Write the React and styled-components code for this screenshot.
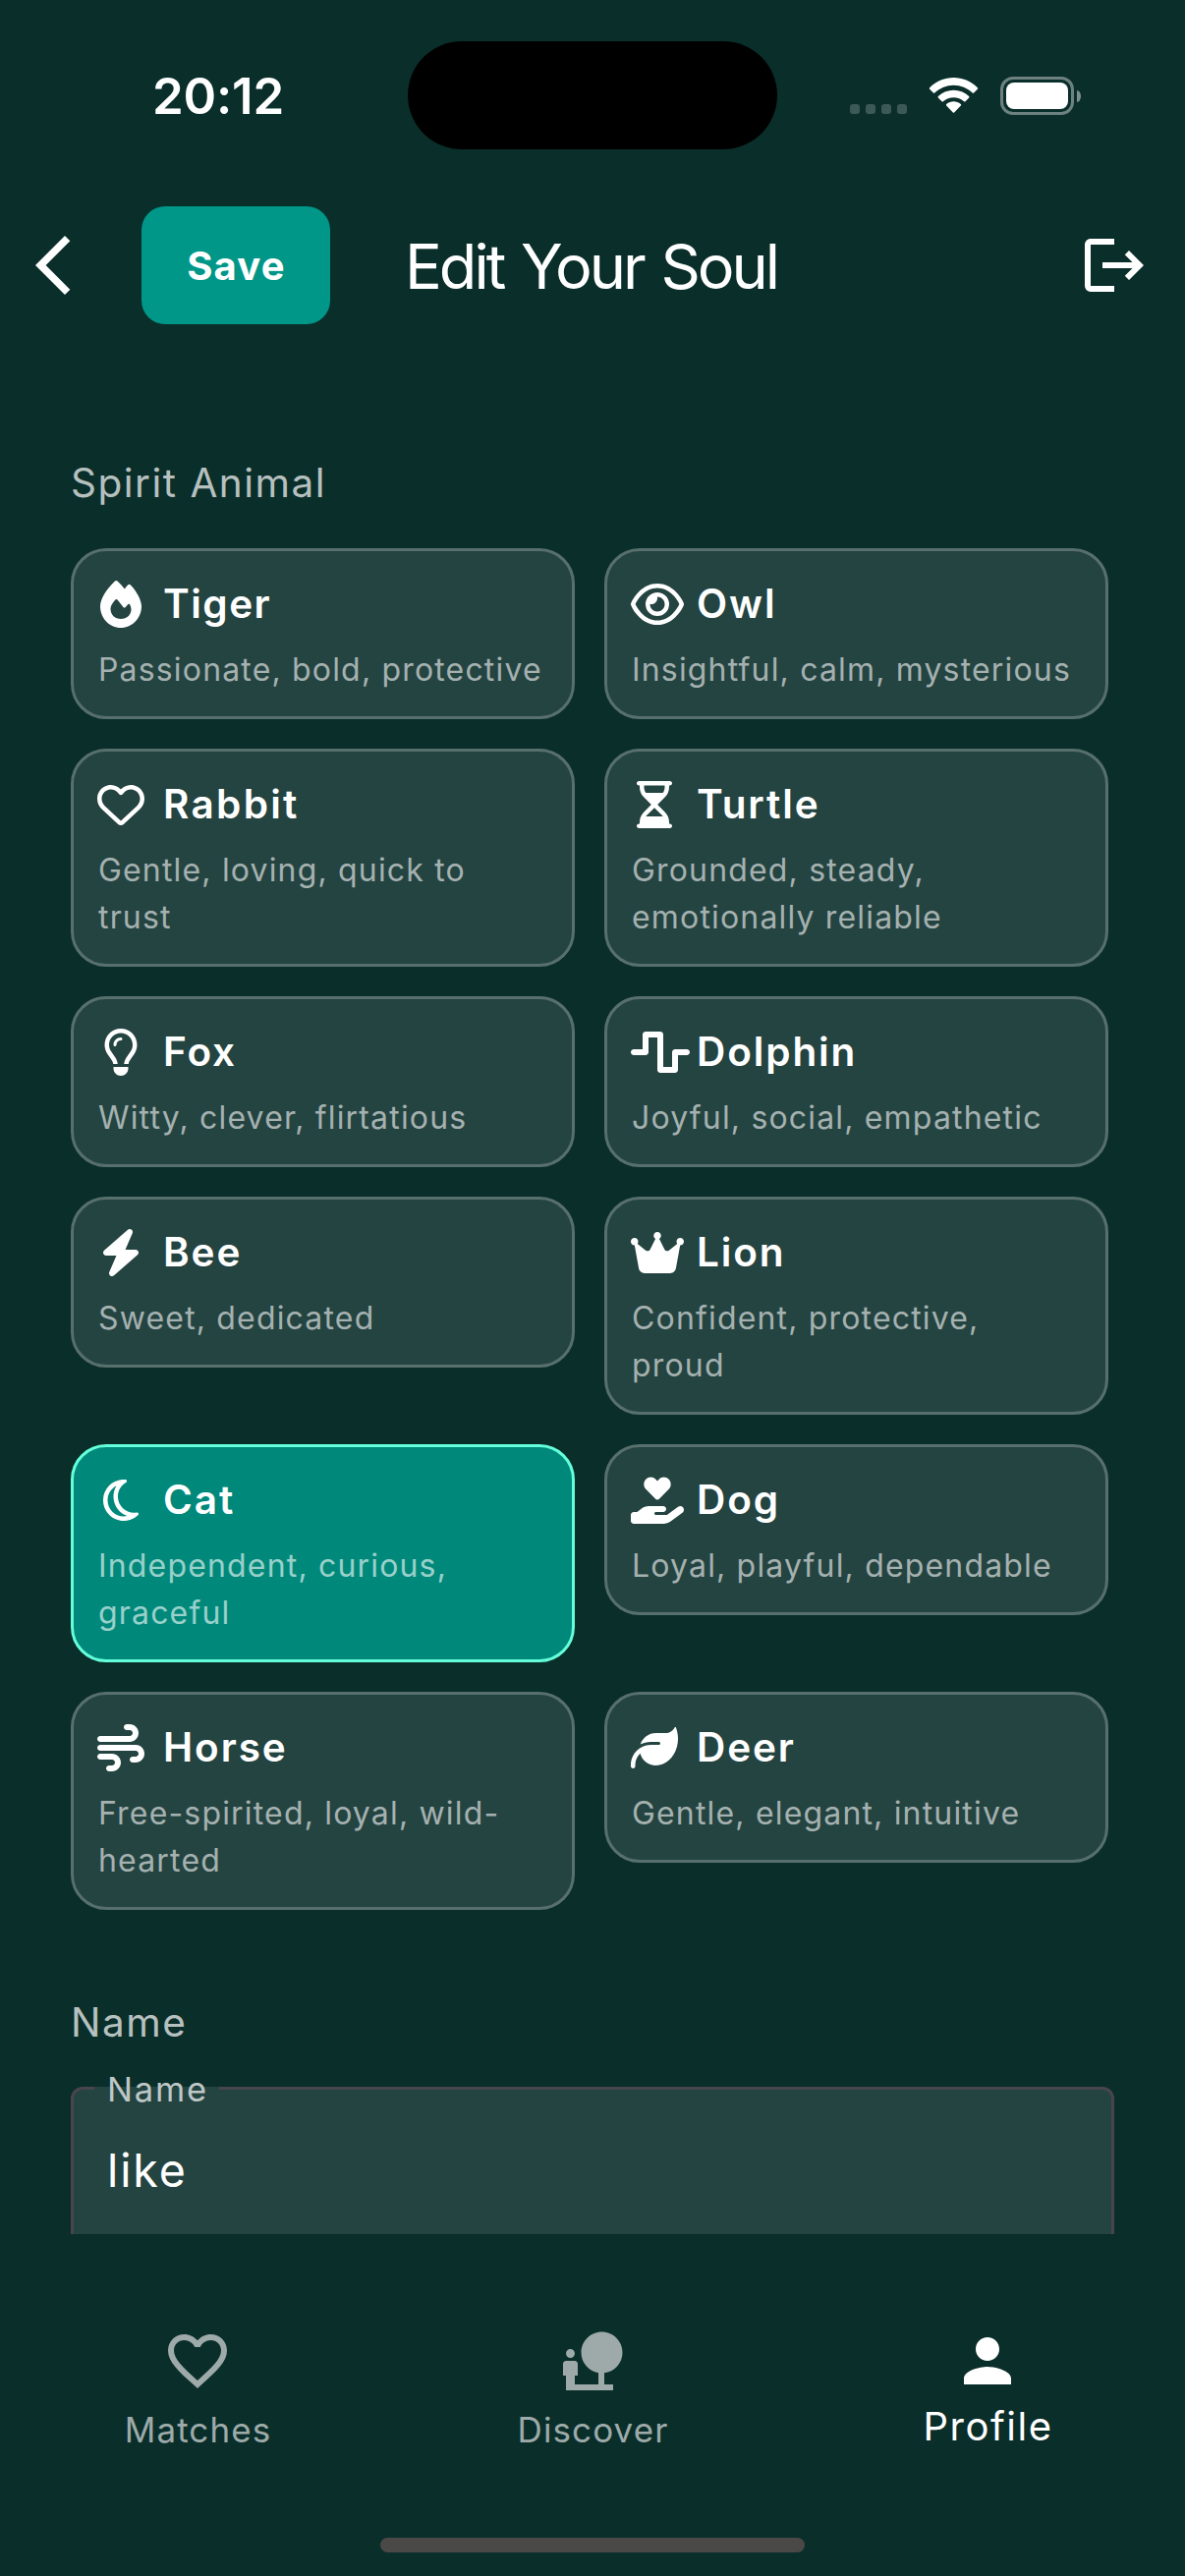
import React from "react";
import styled, { createGlobalStyle, css } from "styled-components";
import {
  FaFire,
  FaRegEye,
  FaRegHeart,
  FaRegHourglassHalf,
  FaRegLightbulb,
  FaWaveSquare,
  FaBolt,
  FaCrown,
  FaRegMoon,
  FaHandHoldingHeart,
  FaWind,
  FaLeaf,
} from "react-icons/fa6";
import { MdArrowBackIosNew, MdFavoriteBorder, MdNaturePeople, MdPerson } from "react-icons/md";

const color = {
  background: "#0a2e2a",
  surface: "#244441",
  surfaceBorder: "#58706d",
  selected: "#00897b",
  selectedBorder: "#64ffda",
  primary: "#009688",
  outline: "#49454f",
  white: "#ffffff",
  label: "#b6c0bf",
  muted: "#9daaa9",
};

const GlobalStyle = createGlobalStyle`
  * { box-sizing: border-box; }
  body {
    margin: 0;
    background: ${color.background};
    font-family: Inter, "Liberation Sans", sans-serif;
    -webkit-font-smoothing: antialiased;
  }
`;

const Screen = styled.div`
  width: 1206px;
  height: 2622px;
  display: flex;
  flex-direction: column;
  background: ${color.background};
  color: ${color.white};
  overflow: hidden;
`;

const StatusBar = styled.div`
  flex: none;
  height: 177px;
  display: grid;
  grid-template-columns: 415px 376px 415px;
  align-items: start;
`;

const Clock = styled.div`
  padding: 68px 0 0 155px;
  font-size: 51px;
  font-weight: 600;
  line-height: 60px;
  letter-spacing: -0.2px;
`;

const Island = styled.div`
  height: 110px;
  margin-top: 42px;
  border-radius: 55px;
  background: #000;
`;

const StatusIcons = styled.div`
  height: 117px;
  padding-left: 74px;
  display: flex;
  align-items: flex-end;
  gap: 22px;
`;

const SignalDots = styled.div`
  display: flex;
  gap: 6px;
  padding-bottom: 1px;
`;

const Dot = styled.span`
  width: 10px;
  height: 10px;
  border-radius: 3px;
  background: #3d5956;
`;

const WifiIcon = styled.svg`
  width: 51px;
  height: 37px;
  margin-bottom: 1px;
  fill: ${color.white};
`;

const Battery = styled.div`
  display: flex;
  align-items: center;
  gap: 3px;
`;

const BatteryCase = styled.div`
  width: 75px;
  height: 39px;
  padding: 3px;
  border: 3px solid #6d8280;
  border-radius: 13px;
`;

const BatteryLevel = styled.div`
  height: 100%;
  border-radius: 8px;
  background: ${color.white};
`;

const BatteryTip = styled.div`
  width: 4px;
  height: 12px;
  border-radius: 0 4px 4px 0 / 0 6px 6px 0;
  background: #7c8f8d;
`;

const Header = styled.header`
  flex: none;
  height: 186px;
  padding: 0 36px 0 18px;
  display: flex;
  align-items: center;
`;

const IconButton = styled.button`
  width: 72px;
  height: 72px;
  padding: 0;
  border: 0;
  background: none;
  color: ${color.white};

  svg {
    display: block;
    width: 72px;
    height: 72px;
    fill: currentColor;
  }
`;

const SaveButton = styled.button`
  width: 192px;
  height: 120px;
  margin-left: 54px;
  padding: 1px 0 0 1px;
  border: 0;
  border-radius: 24px;
  background: ${color.primary};
  color: ${color.white};
  font: 700 40px/60px Inter, sans-serif;
  letter-spacing: 1.2px;
`;

const Title = styled.h1`
  flex: 1;
  margin: 1px 0 0 76px;
  font-size: 63px;
  font-weight: 400;
  line-height: 84px;
  letter-spacing: -3px;
  word-spacing: 3px;
  white-space: nowrap;
`;

const Content = styled.main`
  flex: none;
  height: 1911px;
  padding: 99px 72px 0;
  overflow: hidden;
`;

const SectionLabel = styled.h2`
  margin: 0 0 ${(p) => p.$gap}px;
  color: ${color.label};
  font-size: 40.5px;
  font-weight: 400;
  line-height: 60px;
  letter-spacing: 1.5px;
`;

const CardGrid = styled.div`
  display: grid;
  grid-template-columns: repeat(2, 513px);
  gap: 30px;
  align-items: start;
  margin-bottom: 85px;
`;

const Card = styled.div`
  padding: 24px 24px 23px;
  border: 3px solid ${color.surfaceBorder};
  border-radius: 36px;
  background: ${color.surface};

  ${(p) =>
    p.$selected &&
    css`
      border-color: ${color.selectedBorder};
      background: ${color.selected};
    `}
`;

const CardHeading = styled.div`
  height: 60px;
  display: flex;
  align-items: center;
  gap: 19px;
`;

const IconSlot = styled.span`
  flex: none;
  width: 48px;
  height: 48px;
  display: flex;
  justify-content: ${(p) => (p.$glyph > 48 ? "flex-start" : "center")};

  svg {
    flex: none;
    width: ${(p) => p.$glyph}px;
    height: 48px;
  }
`;

const CardTitle = styled.span`
  font-size: 40.5px;
  font-weight: 600;
  line-height: 60px;
  letter-spacing: ${(p) => p.$tracking}px;
`;

const CardText = styled.p`
  margin: 13px -12px 0 0;
  padding-left: 1px;
  color: ${(p) => (p.$selected ? "#99d0ca" : "#a5b1b0")};
  font-size: 32px;
  line-height: 48px;
  letter-spacing: 1.17px;
  white-space: pre-line;
`;

const Field = styled.div`
  position: relative;
  height: 168px;
  padding: 53px 34px 0;
  border: 3px solid ${color.outline};
  border-radius: 12px;
  background: ${color.surface};
`;

const FloatingLabel = styled.label`
  position: absolute;
  top: -27px;
  left: 21px;
  width: 127px;
  height: 53px;
  padding-left: 13px;
  background: linear-gradient(transparent 24px, ${color.surface} 24px);
  color: #bec7c6;
  font-size: 34.5px;
  line-height: 53px;
  letter-spacing: 1.8px;
`;

const FieldValue = styled.div`
  font-size: 46.5px;
  line-height: 58px;
  letter-spacing: 1.9px;
`;

const TabBar = styled.nav`
  flex: none;
  height: 309px;
  padding-top: 93px;
  display: grid;
  grid-template-columns: repeat(3, 402px);
`;

const Tab = styled.div`
  display: flex;
  flex-direction: column;
  align-items: center;
  color: ${(p) => (p.$active ? color.white : color.muted)};

  svg {
    width: 72px;
    height: 72px;
  }
`;

const TabLabel = styled.span`
  margin-top: ${(p) => (p.$active ? 1 : 10)}px;
  padding-left: 1px;
  font-size: ${(p) => (p.$active ? 40 : 35)}px;
  line-height: ${(p) => (p.$active ? 60 : 48)}px;
  letter-spacing: ${(p) => (p.$active ? 1.5 : 1.1)}px;
`;

const HomeIndicator = styled.div`
  flex: none;
  width: 432px;
  height: 15px;
  margin: 0 auto;
  border-radius: 8px;
  background: #4b4948;
`;

const animals = [
  { name: "Tiger", text: "Passionate, bold, protective", Icon: FaFire, tracking: 1.5 },
  { name: "Owl", text: "Insightful, calm, mysterious", Icon: FaRegEye, glyph: 54 },
  { name: "Rabbit", text: "Gentle, loving, quick to\ntrust", Icon: FaRegHeart, tracking: 2.3 },
  { name: "Turtle", text: "Grounded, steady,\nemotionally reliable", Icon: FaRegHourglassHalf },
  { name: "Fox", text: "Witty, clever, flirtatious", Icon: FaRegLightbulb },
  { name: "Dolphin", text: "Joyful, social, empathetic", Icon: FaWaveSquare, glyph: 60 },
  { name: "Bee", text: "Sweet, dedicated", Icon: FaBolt },
  { name: "Lion", text: "Confident, protective,\nproud", Icon: FaCrown, glyph: 54 },
  { name: "Cat", text: "Independent, curious,\ngraceful", Icon: FaRegMoon, selected: true },
  { name: "Dog", text: "Loyal, playful, dependable", Icon: FaHandHoldingHeart, glyph: 54 },
  { name: "Horse", text: "Free-spirited, loyal, wild-\nhearted", Icon: FaWind },
  { name: "Deer", text: "Gentle, elegant, intuitive", Icon: FaLeaf },
];

const tabs = [
  { name: "Matches", Icon: MdFavoriteBorder },
  { name: "Discover", Icon: MdNaturePeople },
  { name: "Profile", Icon: MdPerson, active: true },
];

function AnimalCard({ name, text, Icon, glyph = 48, selected, tracking = 1.9 }) {
  return (
    <Card $selected={selected}>
      <CardHeading>
        <IconSlot $glyph={glyph}>
          <Icon />
        </IconSlot>
        <CardTitle $tracking={tracking}>{name}</CardTitle>
      </CardHeading>
      <CardText $selected={selected}>{text}</CardText>
    </Card>
  );
}

export default function App() {
  return (
    <Screen>
      <GlobalStyle />
      <StatusBar>
        <Clock>20:12</Clock>
        <Island />
        <StatusIcons>
          <SignalDots>
            <Dot />
            <Dot />
            <Dot />
            <Dot />
          </SignalDots>
          <WifiIcon viewBox="0 0 17 12.33" preserveAspectRatio="none">
            <path d="M8.5 2.55c2.4 0 4.7.95 6.4 2.6.13.13.34.13.47 0l1.25-1.27c.13-.13.13-.35 0-.49-4.5-4.5-11.75-4.5-16.24 0-.13.14-.13.36 0 .49l1.25 1.27c.13.13.34.13.47 0 1.75-1.65 4.05-2.6 6.4-2.6z" />
            <path d="M8.5 6.72c1.3 0 2.55.5 3.52 1.37.13.13.34.13.47 0l1.24-1.27c.13-.14.13-.36 0-.5-2.95-2.8-7.5-2.8-10.46 0-.13.14-.13.36 0 .5l1.24 1.27c.13.13.34.13.47 0C5.95 7.22 7.2 6.72 8.5 6.72z" />
            <path d="M10.95 9.5c.14-.13.13-.36 0-.49-1.42-1.23-3.48-1.23-4.9 0-.13.13-.14.36 0 .49l2.22 2.3c.12.13.34.13.46 0z" />
          </WifiIcon>
          <Battery>
            <BatteryCase>
              <BatteryLevel />
            </BatteryCase>
            <BatteryTip />
          </Battery>
        </StatusIcons>
      </StatusBar>

      <Header>
        <IconButton aria-label="Back">
          <MdArrowBackIosNew />
        </IconButton>
        <SaveButton>Save</SaveButton>
        <Title>Edit Your Soul</Title>
        <IconButton aria-label="Log out">
          <svg viewBox="0 0 24 24">
            <path d="M17 7l-1.41 1.41L18.17 11H8v2h10.17l-2.58 2.58L17 17l5-5M4 5h8V3H4c-1.1 0-2 .9-2 2v14a2 2 0 0 0 2 2h8v-2H4V5z" />
          </svg>
        </IconButton>
      </Header>

      <Content>
        <SectionLabel $gap={36}>Spirit Animal</SectionLabel>
        <CardGrid>
          {animals.map((animal) => (
            <AnimalCard key={animal.name} {...animal} />
          ))}
        </CardGrid>
        <SectionLabel $gap={35}>Name</SectionLabel>
        <Field>
          <FloatingLabel>Name</FloatingLabel>
          <FieldValue>like</FieldValue>
        </Field>
      </Content>

      <TabBar>
        {tabs.map(({ name, Icon, active }) => (
          <Tab key={name} $active={active}>
            <Icon />
            <TabLabel $active={active}>{name}</TabLabel>
          </Tab>
        ))}
      </TabBar>
      <HomeIndicator />
    </Screen>
  );
}
